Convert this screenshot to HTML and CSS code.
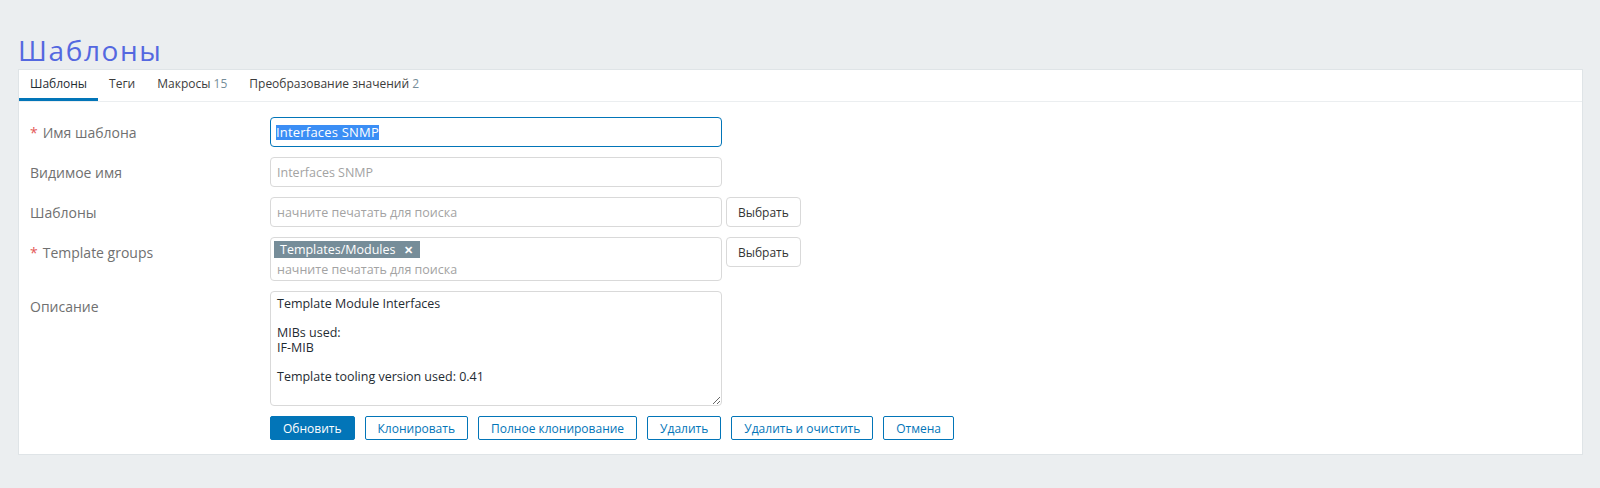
FILE: index.html
```html
<!DOCTYPE html>
<html lang="ru">
<head>
    <meta charset="UTF-8">
    <title>Шаблоны</title>
    <link rel="stylesheet" href="styles.css">
</head>
<body>
    <header class="page-header">
        <h1>Шаблоны</h1>
    </header>

    <main class="wrapper">
        <div class="panel">
            <!-- Tabs -->
            <ul class="tabs">
                <li class="tab active">Шаблоны</li>
                <li class="tab">Теги</li>
                <li class="tab">Макросы <span class="count">15</span></li>
                <li class="tab">Преобразование значений <span class="count">2</span></li>
            </ul>

            <!-- Template form -->
            <form class="form-grid">
                <label class="form-label required">Имя шаблона</label>
                <div class="form-field">
                    <div class="text-input focused"><span class="selection">Interfaces SNMP</span></div>
                </div>

                <label class="form-label">Видимое имя</label>
                <div class="form-field">
                    <input class="text-input" type="text" placeholder="Interfaces SNMP">
                </div>

                <label class="form-label">Шаблоны</label>
                <div class="form-field">
                    <input class="text-input" type="text" placeholder="начните печатать для поиска">
                    <button type="button" class="btn-grey">Выбрать</button>
                </div>

                <label class="form-label required">Template groups</label>
                <div class="form-field">
                    <div class="multiselect">
                        <span class="tag">Templates/Modules <span class="tag-remove">&#x2715;</span></span>
                        <input class="ms-input" type="text" placeholder="начните печатать для поиска">
                    </div>
                    <button type="button" class="btn-grey">Выбрать</button>
                </div>

                <label class="form-label">Описание</label>
                <div class="form-field">
                    <textarea class="text-area">Template Module Interfaces

MIBs used:
IF-MIB

Template tooling version used: 0.41</textarea>
                </div>

                <div></div>
                <div class="form-buttons">
                    <button type="button" class="btn-main">Обновить</button>
                    <button type="button" class="btn-alt">Клонировать</button>
                    <button type="button" class="btn-alt">Полное клонирование</button>
                    <button type="button" class="btn-alt">Удалить</button>
                    <button type="button" class="btn-alt">Удалить и очистить</button>
                    <button type="button" class="btn-alt">Отмена</button>
                </div>
            </form>
        </div>
    </main>
</body>
</html>
```

FILE: styles.css
```css
body {
    margin: 0;
    background-color: #ebeef0;
    font-family: "Open Sans", Arial, sans-serif;
    color: #1f2c33;
}
.page-header {
    padding: 30px 18px 0;
    height: 39px;
}
.page-header h1 {
    margin: 0;
    font-size: 28px;
    font-weight: 400;
    letter-spacing: 1.6px;
    line-height: 40px;
    color: #5468e0;
}
.wrapper {
    padding: 0 17px 0 18px;
}
.panel {
    background-color: #fff;
    border: 1px solid #dfe4e7;
}
.tabs {
    display: flex;
    margin: 0;
    padding: 0;
    list-style: none;
    height: 31px;
    border-bottom: 1px solid #ebeef0;
}
.tab {
    padding: 0 11px;
    font-size: 12px;
    line-height: 28px;
    border-bottom: 3px solid transparent;
    color: #3c3c3c;
}
.tab.active {
    border-bottom-color: #0275b8;
    color: #1f2c33;
}
.count {
    color: #768d99;
}
.form-grid {
    display: grid;
    grid-template-columns: 240px 1fr;
    row-gap: 10px;
    padding: 15px 0 14px 11px;
}
.form-label {
    font-size: 14px;
    line-height: 18px;
    padding-top: 7px;
    color: #707070;
}
.form-label.required::before {
    content: "*";
    color: #e45959;
    margin-right: 5px;
}
.form-field {
    display: flex;
    align-items: flex-start;
    gap: 4px;
}
.text-input {
    box-sizing: border-box;
    width: 452px;
    height: 30px;
    padding: 0 6px;
    border: 1px solid #d9d9d9;
    border-radius: 4px;
    font-family: inherit;
    font-size: 12.5px;
    color: #1f2c33;
    outline: none;
}
div.text-input {
    display: flex;
    align-items: center;
    padding-left: 5px;
}
.text-input.focused {
    border-color: #0275b8;
}
.selection {
    background-color: #3b8ef5;
    color: #fff;
    font-size: 13px;
    line-height: 15px;
    letter-spacing: 0.2px;
}
.text-input::placeholder,
.ms-input::placeholder {
    color: #a3a3a3;
}
.btn-grey {
    box-sizing: border-box;
    height: 30px;
    padding: 0 11px;
    background-color: #fff;
    border: 1px solid #d9d9d9;
    border-radius: 4px;
    font-family: inherit;
    font-size: 12px;
    color: #333;
}
.multiselect {
    box-sizing: border-box;
    display: flex;
    flex-direction: column;
    align-items: flex-start;
    width: 452px;
    height: 44px;
    padding: 3px 3px 0;
    border: 1px solid #d9d9d9;
    border-radius: 4px;
}
.tag {
    padding: 0 7px 0 6px;
    background-color: #768d99;
    color: #fff;
    font-size: 12.5px;
    line-height: 17px;
}
.tag-remove {
    font-size: 11px;
    font-weight: 700;
    margin-left: 5px;
}
.ms-input {
    box-sizing: border-box;
    width: 100%;
    border: none;
    padding: 4px 3px 0;
    font-family: inherit;
    font-size: 12.5px;
    line-height: 16px;
    outline: none;
}
.text-area {
    box-sizing: border-box;
    width: 452px;
    height: 115px;
    padding: 5px 6px;
    border: 1px solid #d9d9d9;
    border-radius: 4px;
    font-family: inherit;
    font-size: 12.5px;
    line-height: 14.5px;
    color: #1f2c33;
}
.form-buttons {
    display: flex;
    gap: 10px;
}
.form-buttons button {
    height: 24px;
    padding: 0 12px;
    border: 1px solid #0275b8;
    border-radius: 2px;
    font-family: inherit;
    font-size: 12px;
    cursor: pointer;
}
.btn-main {
    background-color: #0275b8;
    color: #fff;
}
.btn-alt {
    background-color: #fff;
    color: #0275b8;
}
```
